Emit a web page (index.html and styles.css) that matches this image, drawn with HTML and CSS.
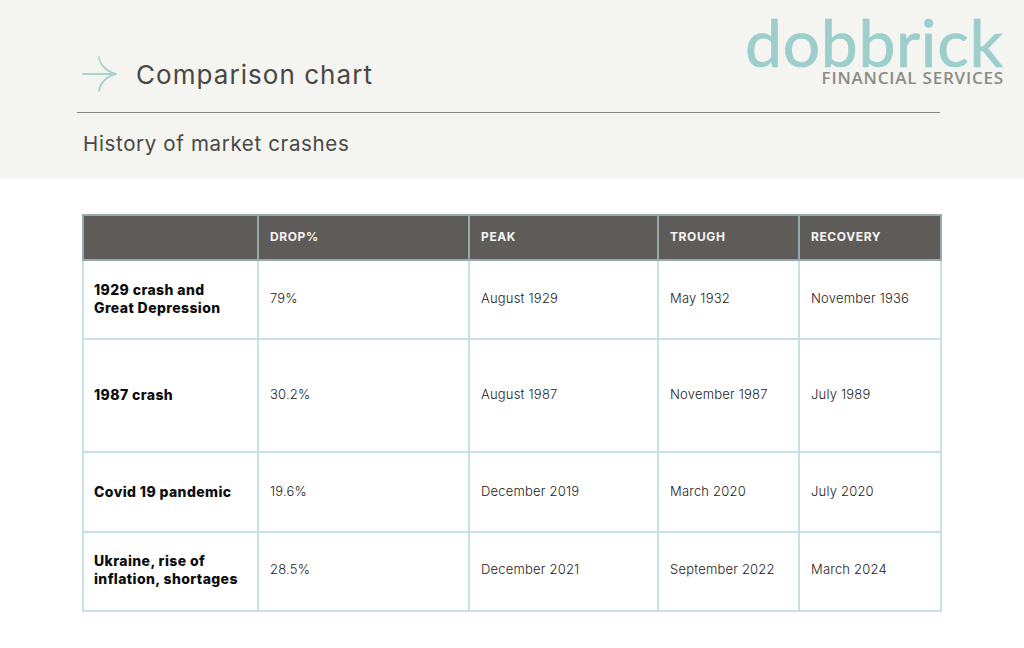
FILE: index.html
```html
<!DOCTYPE html>
<html lang="en">
<head>
<meta charset="utf-8">
<title>Comparison chart</title>
<link rel="stylesheet" href="styles.css">
</head>
<body>
<header class="header">
  <div class="logo">
    <div class="logo-word">dobbrick</div>
    <div class="logo-sub">FINANCIAL SERVICES</div>
  </div>
  <div class="title-row">
    <svg class="arrow" width="36" height="36" viewBox="0 0 36 36" fill="none" stroke="#a9d3ce" stroke-width="1.8" stroke-linecap="round">
      <path d="M1 18H34"/>
      <path d="M17 1C18 9 25 16 34 18C25 20 18 27 17 35"/>
    </svg>
    <h1 class="title">Comparison chart</h1>
  </div>
  <div class="rule"></div>
  <h2 class="subtitle">History of market crashes</h2>
</header>
<main class="content">
  <table class="chart">
    <colgroup>
      <col class="c1"><col class="c2"><col class="c3"><col class="c4"><col class="c5">
    </colgroup>
    <thead>
      <tr class="r-head"><th></th><th>DROP%</th><th>PEAK</th><th>TROUGH</th><th>RECOVERY</th></tr>
    </thead>
    <tbody>
      <tr class="r1"><th>1929 crash and<br>Great Depression</th><td>79%</td><td>August 1929</td><td>May 1932</td><td>November 1936</td></tr>
      <tr class="r2"><th>1987 crash</th><td>30.2%</td><td>August 1987</td><td>November 1987</td><td>July 1989</td></tr>
      <tr class="r3"><th>Covid 19 pandemic</th><td>19.6%</td><td>December 2019</td><td>March 2020</td><td>July 2020</td></tr>
      <tr class="r4"><th>Ukraine, rise of<br>inflation, shortages</th><td>28.5%</td><td>December 2021</td><td>September 2022</td><td>March 2024</td></tr>
    </tbody>
  </table>
</main>
</body>
</html>
```
FILE: styles.css
```css
* { box-sizing: border-box; }
html, body { margin: 0; padding: 0; }
body {
  width: 1024px;
  height: 648px;
  overflow: hidden;
  background: #ffffff;
  font-family: "Inter", "Liberation Sans", sans-serif;
  color: #111;
}
.header {
  position: relative;
  height: 178px;
  background: #f4f4f0;
  padding: 56px 0 0 77px;
}
.logo {
  position: absolute;
  top: 0;
  left: 745px;
  width: 260px;
}
.logo-word {
  font-family: "Lato", sans-serif;
  font-size: 66px;
  line-height: 83px;
  font-weight: 400;
  letter-spacing: 0.7px;
  -webkit-text-stroke: 0.7px #9ccfcb;
  color: #9ccfcb;
  height: 68px;
  white-space: nowrap;
}
.logo-sub {
  font-family: "Open Sans", sans-serif;
  font-size: 17px;
  line-height: 20px;
  font-weight: 600;
  letter-spacing: 0.8px;
  color: #8b8b88;
  text-align: right;
  margin-right: 1px;
  white-space: nowrap;
}
.title-row {
  display: flex;
  align-items: center;
  gap: 18px;
  padding-left: 5px;
  height: 36px;
}
.title {
  margin: 2px 0 0;
  font-size: 26px;
  line-height: 34px;
  font-weight: 400;
  letter-spacing: 1.05px;
  color: #4a4743;
}
.rule {
  width: 863px;
  height: 1px;
  margin-top: 20px;
  background: #858580;
}
.subtitle {
  margin: 18px 0 0 6px;
  font-size: 20.5px;
  line-height: 26px;
  font-weight: 400;
  letter-spacing: 0.65px;
  color: #4a4743;
}
.content { padding: 36px 0 0 82px; }
.chart {
  border-collapse: collapse;
  table-layout: fixed;
  width: 858px;
}
.c1 { width: 175px; }
.c2 { width: 211px; }
.c3 { width: 189px; }
.c4 { width: 141px; }
.c5 { width: 142px; }
.chart th, .chart td {
  border: 2px solid #c8dfe3;
  padding: 0 10px 3px 11px;
  text-align: left;
  vertical-align: middle;
}
.chart thead th {
  background: #5f5b59;
  border-color: #93abab;
  color: #f5f5f5;
  font-size: 12px;
  font-weight: 700;
  letter-spacing: 0.6px;
}
.chart tbody th {
  font-size: 14px;
  line-height: 18px;
  font-weight: 800;
  letter-spacing: 0.4px;
  color: #0d0d0d;
  padding-left: 10px;
  padding-bottom: 1px;
}
.chart td {
  font-size: 13px;
  font-weight: 300;
  letter-spacing: 0.2px;
  color: #222;
}
.chart .r1 td { padding-bottom: 4px; }
.chart .r4 th { padding-bottom: 3px; }
.chart .r4 td { padding-bottom: 6px; }
.r-head { height: 45px; }
.r1 { height: 79px; }
.r2 { height: 113px; }
.r3 { height: 80px; }
.r4 { height: 79px; }
```
